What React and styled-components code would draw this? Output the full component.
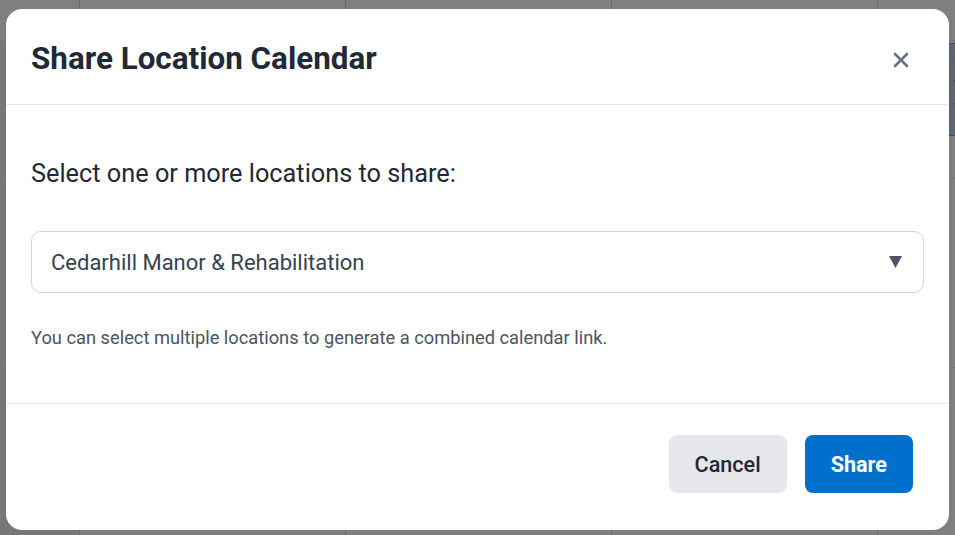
import React from 'react';
import styled, { createGlobalStyle } from 'styled-components';

const GlobalStyle = createGlobalStyle`
  html, body {
    margin: 0;
    padding: 0;
    width: 100%;
    height: 100%;
    overflow: hidden;
  }
  body {
    font-family: Roboto, "Liberation Sans", Arial, sans-serif;
    background: #ffffff;
  }
  * {
    box-sizing: border-box;
  }
`;

const Page = styled.div`
  position: relative;
  width: 100vw;
  height: 100vh;
  overflow: hidden;
`;

const CalendarGrid = styled.div`
  display: grid;
  grid-template-columns: 79px repeat(3, 266px) 1fr;
  grid-template-rows: 40px 138px 189px 1fr;
  height: 100%;
`;

const Cell = styled.div`
  position: relative;
  border-left: ${(p) => (p.$first ? 'none' : '1px solid #d1d5db')};
  border-top: ${(p) => (p.$head ? 'none' : '1px solid #e5e7eb')};
  background: ${(p) => (p.$gutter && !p.$head ? '#eceef0' : '#ffffff')};
`;

const EventBlock = styled.div`
  position: absolute;
  top: 2px;
  left: 4px;
  right: 0;
  height: 93px;
  background: #bccbe3;
  border: 1px solid #8a9bb8;
  border-right: none;
  padding: 8px 0 0 71px;
  font-size: 15px;
  line-height: 23px;
  color: #1e2a3b;
  white-space: nowrap;
  overflow: hidden;
`;

const Overlay = styled.div`
  position: absolute;
  inset: 0;
  background: rgba(0, 0, 0, 0.5);
  display: flex;
  align-items: flex-start;
  justify-content: center;
  padding: 9px 6px 0;
`;

const Modal = styled.div`
  width: 100%;
  background: #ffffff;
  border-radius: 16px;
  display: flex;
  flex-direction: column;
  overflow: hidden;
`;

const Header = styled.div`
  display: flex;
  align-items: center;
  justify-content: space-between;
  height: 96px;
  padding: 4px 36px 0 25px;
  border-bottom: 1px solid #e5e7eb;
`;

const Title = styled.h2`
  margin: 0;
  font-size: 31.4px;
  font-weight: 700;
  color: #1f2937;
  letter-spacing: 0;
`;

const CloseButton = styled.button`
  border: none;
  background: none;
  padding: 0;
  width: 24px;
  height: 24px;
  display: flex;
  align-items: center;
  justify-content: center;
  color: #6b7280;
  cursor: pointer;
  margin-top: 3px;
`;

const Body = styled.div`
  padding: 52px 25px 0;
  height: 299px;
  border-bottom: 1px solid #e5e7eb;
`;

const Label = styled.p`
  margin: 0 0 40px;
  font-size: 25.3px;
  line-height: 1.35;
  color: #1f2937;
`;

const SelectBox = styled.div`
  display: flex;
  align-items: center;
  justify-content: space-between;
  height: 62px;
  padding: 0 21px 0 19px;
  border: 1px solid #d1d5db;
  border-radius: 10px;
  font-size: 22px;
  color: #374151;
  cursor: pointer;
`;

const Caret = styled.svg`
  width: 13px;
  height: 12px;
  color: #4b5563;
`;

const Help = styled.p`
  margin: 31px 0 0;
  font-size: 18.3px;
  line-height: 1.5;
  color: #4b5563;
`;

const Footer = styled.div`
  display: flex;
  justify-content: flex-end;
  gap: 18px;
  padding: 31px 36px 37px;
`;

const Button = styled.button`
  height: 58px;
  padding: 0 26px;
  border: none;
  border-radius: 8px;
  font-family: inherit;
  font-size: 21.6px;
  font-weight: ${(p) => (p.$primary ? 700 : 500)};
  background: ${(p) => (p.$primary ? '#0070cc' : '#e5e7eb')};
  color: ${(p) => (p.$primary ? '#ffffff' : '#1f2937')};
  cursor: pointer;
`;

const rows = [0, 1, 2, 3];
const cols = [0, 1, 2, 3, 4];

export default function App() {
  return (
    <Page>
      <GlobalStyle />
      <CalendarGrid>
        {rows.map((r) =>
          cols.map((c) => (
            <Cell key={`${r}-${c}`} $first={c === 0} $head={r === 0} $gutter={c === 0}>
              {r === 1 && c === 4 && (
                <EventBlock>
                  Room
                  <br />
                  Visit
                  <br />
                  Walk
                </EventBlock>
              )}
            </Cell>
          ))
        )}
      </CalendarGrid>
      <Overlay>
        <Modal>
          <Header>
            <Title>Share Location Calendar</Title>
            <CloseButton aria-label="Close">
              <svg width="16" height="16" viewBox="0 0 16 16" fill="none">
                <path d="M2 2L14 14M14 2L2 14" stroke="currentColor" strokeWidth="2.6" strokeLinecap="round" />
              </svg>
            </CloseButton>
          </Header>
          <Body>
            <Label>Select one or more locations to share:</Label>
            <SelectBox>
              <span>Cedarhill Manor &amp; Rehabilitation</span>
              <Caret viewBox="0 0 13 12">
                <path d="M0 0H13L6.5 12Z" fill="currentColor" />
              </Caret>
            </SelectBox>
            <Help>You can select multiple locations to generate a combined calendar link.</Help>
          </Body>
          <Footer>
            <Button>Cancel</Button>
            <Button $primary>Share</Button>
          </Footer>
        </Modal>
      </Overlay>
    </Page>
  );
}
